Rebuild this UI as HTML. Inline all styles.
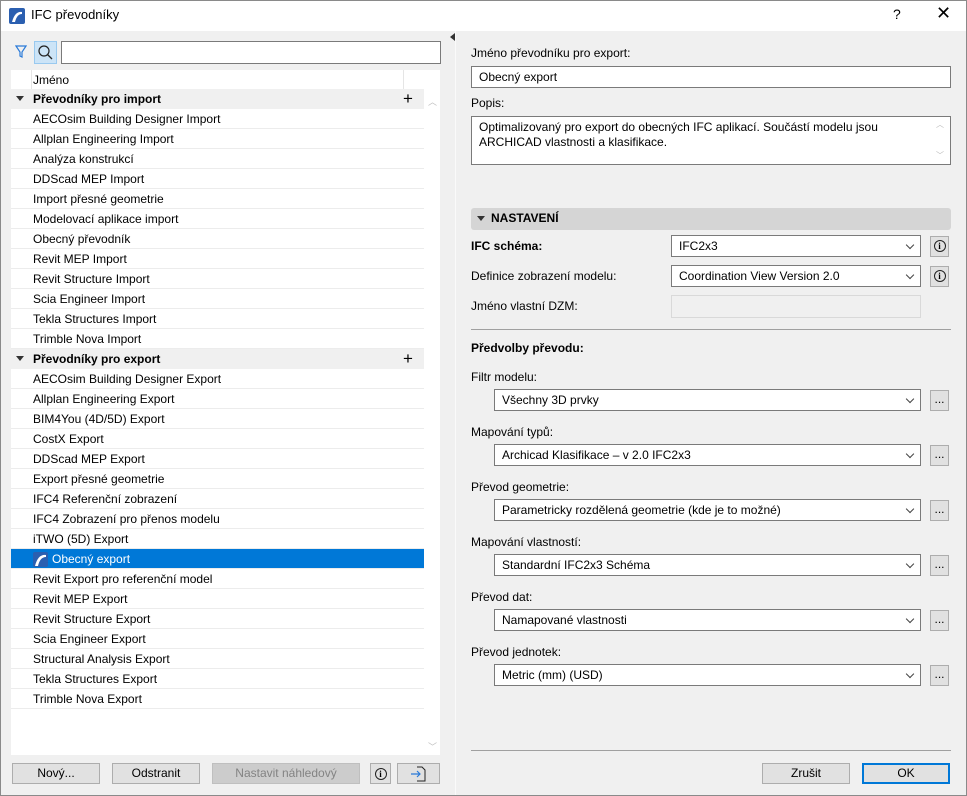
<!DOCTYPE html>
<html><head><meta charset="utf-8"><style>
*{box-sizing:border-box;margin:0;padding:0}
body{width:967px;height:796px;background:#f0f0f0;font-family:"Segoe UI","Liberation Sans","DejaVu Sans",sans-serif;font-size:12px;color:#000;position:relative;overflow:hidden}
.abs{position:absolute}
#win{position:absolute;left:0;top:0;width:967px;height:796px;border:1px solid #8a8a8a}
#title{position:absolute;left:0;top:0;width:967px;height:31px;background:#fff}
.list{position:absolute;left:11px;top:70px;width:429px;height:685px;background:#fff}
.row{position:absolute;left:0;width:413px;height:20px;line-height:21px;padding-left:22px;border-bottom:1px solid #ececec;white-space:nowrap}
.grp{background:#f0f0f0;font-weight:bold;border-bottom:none}
.sel{background:#0078d7;color:#fff}
.btn{position:absolute;height:21px;border:1px solid #adadad;background:#e1e1e1;text-align:center;line-height:19px}
.inp{position:absolute;background:#fff;border:1px solid #7a7a7a;padding-left:7px;line-height:21px;height:22px}
.dd{position:absolute;background:#fff;border:1px solid #7a7a7a;padding-left:7px;line-height:21px;height:22px}
.dd::after{content:"";position:absolute;right:7px;top:6px;width:5px;height:5px;border-right:1px solid #444;border-bottom:1px solid #444;transform:rotate(45deg)}
.lbl{position:absolute;left:471px}
.sq{position:absolute;width:19px;height:21px;border:1px solid #adadad;background:#e1e1e1;text-align:center;line-height:17px}
.info{display:inline-block;width:12px;height:12px;border:1.3px solid #222;border-radius:50%;font-size:9px;line-height:10px;font-weight:bold;font-family:"Liberation Serif",serif;margin-top:3px}
</style></head><body>
<div id="title">
<svg class="abs" style="left:9px;top:8px" width="16" height="16"><rect width="16" height="16" rx="2" fill="#2b5fb0"/><path d="M3 14 Q6 3 13 4 L13 6 Q8 6 6 14Z" fill="#fff"/></svg>
<div class="abs" style="left:31px;top:7px;font-size:13px">IFC převodníky</div>
<div class="abs" style="left:893px;top:6px;font-size:14px">?</div>
<div class="abs" style="left:936px;top:3px;font-size:18px">✕</div>
</div>
<svg class="abs" style="left:15px;top:45px" width="12" height="14"><path d="M1 1H11L7 7V12L5 11V7Z" fill="none" stroke="#2a7ad8" stroke-width="1.2"/></svg>
<div class="abs" style="left:34px;top:41px;width:23px;height:23px;background:#cce4f7;border:1px solid #99c9ef"></div>
<svg class="abs" style="left:37px;top:44px" width="17" height="17"><circle cx="7" cy="7" r="5" fill="none" stroke="#222" stroke-width="1.2"/><path d="M10.5 10.5L15 15" stroke="#222" stroke-width="1.3"/></svg>
<div class="abs" style="left:61px;top:41px;width:380px;height:23px;background:#fff;border:1px solid #7a7a7a"></div>
<div class="list">
<div class="row" style="top:0;border-bottom:1px solid #e5e5e5">Jméno</div>
<div class="abs" style="left:20px;top:0;width:1px;height:19px;background:#e5e5e5"></div>
<div class="abs" style="left:392px;top:0;width:1px;height:19px;background:#e5e5e5"></div>
<div class="row grp" style="top:19px">Převodníky pro import</div>
<div class="row" style="top:39px">AECOsim Building Designer Import</div>
<div class="row" style="top:59px">Allplan Engineering Import</div>
<div class="row" style="top:79px">Analýza konstrukcí</div>
<div class="row" style="top:99px">DDScad MEP Import</div>
<div class="row" style="top:119px">Import přesné geometrie</div>
<div class="row" style="top:139px">Modelovací aplikace import</div>
<div class="row" style="top:159px">Obecný převodník</div>
<div class="row" style="top:179px">Revit MEP Import</div>
<div class="row" style="top:199px">Revit Structure Import</div>
<div class="row" style="top:219px">Scia Engineer Import</div>
<div class="row" style="top:239px">Tekla Structures Import</div>
<div class="row" style="top:259px">Trimble Nova Import</div>
<div class="row grp" style="top:279px">Převodníky pro export</div>
<div class="row" style="top:299px">AECOsim Building Designer Export</div>
<div class="row" style="top:319px">Allplan Engineering Export</div>
<div class="row" style="top:339px">BIM4You (4D/5D) Export</div>
<div class="row" style="top:359px">CostX Export</div>
<div class="row" style="top:379px">DDScad MEP Export</div>
<div class="row" style="top:399px">Export přesné geometrie</div>
<div class="row" style="top:419px">IFC4 Referenční zobrazení</div>
<div class="row" style="top:439px">IFC4 Zobrazení pro přenos modelu</div>
<div class="row" style="top:459px">iTWO (5D) Export</div>
<div class="row sel" style="top:479px;padding-left:41px">Obecný export</div>
<svg class="abs" style="left:22px;top:482px" width="15" height="15"><rect width="15" height="15" rx="2" fill="#2b5fb0"/><path d="M2 14 Q5 2 13 3 L13 5 Q7 5 5 14Z" fill="#fff"/></svg>
<div class="row" style="top:499px">Revit Export pro referenční model</div>
<div class="row" style="top:519px">Revit MEP Export</div>
<div class="row" style="top:539px">Revit Structure Export</div>
<div class="row" style="top:559px">Scia Engineer Export</div>
<div class="row" style="top:579px">Structural Analysis Export</div>
<div class="row" style="top:599px">Tekla Structures Export</div>
<div class="row" style="top:619px">Trimble Nova Export</div>
<div class="abs" style="left:5px;top:26px;border:4px solid transparent;border-top:5px solid #333"></div>
<div class="abs" style="left:5px;top:286px;border:4px solid transparent;border-top:5px solid #333"></div>
<div class="abs" style="left:392px;top:19px;font-size:17px;line-height:20px">+</div>
<div class="abs" style="left:392px;top:279px;font-size:17px;line-height:20px">+</div>
<div class="abs" style="left:417px;top:25px;color:#c0c0c0;font-size:9px">︿</div>
<div class="abs" style="left:417px;top:670px;color:#c0c0c0;font-size:9px">﹀</div>
</div>
<div class="abs" style="left:450px;top:33px;border:4px solid transparent;border-right:5px solid #333;border-left:none"></div>
<div class="abs" style="left:455px;top:31px;width:1px;height:764px;background:#fafafa"></div>
<div class="btn" style="left:12px;top:763px;width:88px">Nový...</div>
<div class="btn" style="left:112px;top:763px;width:88px">Odstranit</div>
<div class="btn" style="left:212px;top:763px;width:148px;background:#ccc;border-color:#bfbfbf;color:#838383">Nastavit náhledový</div>
<div class="btn" style="left:370px;top:763px;width:21px"><span class="info" style="margin-top:2px">i</span></div>
<div class="btn" style="left:397px;top:763px;width:43px"><svg width="20" height="17" style="margin-top:1px"><path d="M8 2H13L16 5V16H8" fill="none" stroke="#222"/><path d="M2 9H11M8 6L11 9L8 12" fill="none" stroke="#2a7ad8" stroke-width="1.2"/></svg></div>
<div class="lbl" style="top:46px">Jméno převodníku pro export:</div>
<div class="inp" style="left:471px;top:66px;width:480px">Obecný export</div>
<div class="lbl" style="top:96px">Popis:</div>
<div class="inp" style="left:471px;top:116px;width:480px;height:49px;line-height:15px;padding-top:3px;padding-right:24px">Optimalizovaný pro export do obecných IFC aplikací. Součástí modelu jsou ARCHICAD vlastnosti a klasifikace.</div>
<div class="abs" style="left:936px;top:119px;color:#bbb;font-size:8px">︿</div>
<div class="abs" style="left:936px;top:150px;color:#bbb;font-size:8px">﹀</div>
<div class="abs" style="left:471px;top:208px;width:480px;height:22px;background:#d5d5d5;border-radius:3px;font-weight:bold;line-height:21px;padding-left:20px">NASTAVENÍ</div>
<div class="abs" style="left:477px;top:216px;border:4px solid transparent;border-top:5px solid #333"></div>
<div class="lbl" style="top:239px;font-weight:bold">IFC schéma:</div>
<div class="dd" style="left:671px;top:235px;width:250px">IFC2x3</div>
<div class="sq" style="left:930px;top:236px"><span class="info">i</span></div>
<div class="lbl" style="top:269px">Definice zobrazení modelu:</div>
<div class="dd" style="left:671px;top:265px;width:250px">Coordination View Version 2.0</div>
<div class="sq" style="left:930px;top:266px"><span class="info">i</span></div>
<div class="lbl" style="top:299px">Jméno vlastní DZM:</div>
<div class="abs" style="left:671px;top:295px;width:250px;height:23px;border:1px solid #d9d9d9;background:#f0f0f0"></div>
<div class="abs" style="left:471px;top:329px;width:480px;height:1px;background:#a0a0a0"></div>
<div class="lbl" style="top:341px;font-weight:bold">Předvolby převodu:</div>
<div class="lbl" style="top:370px">Filtr modelu:</div>
<div class="dd" style="left:494px;top:389px;width:427px">Všechny 3D prvky</div>
<div class="sq" style="left:930px;top:390px">...</div>
<div class="lbl" style="top:425px">Mapování typů:</div>
<div class="dd" style="left:494px;top:444px;width:427px">Archicad Klasifikace – v 2.0 IFC2x3</div>
<div class="sq" style="left:930px;top:445px">...</div>
<div class="lbl" style="top:480px">Převod geometrie:</div>
<div class="dd" style="left:494px;top:499px;width:427px">Parametricky rozdělená geometrie (kde je to možné)</div>
<div class="sq" style="left:930px;top:500px">...</div>
<div class="lbl" style="top:535px">Mapování vlastností:</div>
<div class="dd" style="left:494px;top:554px;width:427px">Standardní IFC2x3 Schéma</div>
<div class="sq" style="left:930px;top:555px">...</div>
<div class="lbl" style="top:590px">Převod dat:</div>
<div class="dd" style="left:494px;top:609px;width:427px">Namapované vlastnosti</div>
<div class="sq" style="left:930px;top:610px">...</div>
<div class="lbl" style="top:645px">Převod jednotek:</div>
<div class="dd" style="left:494px;top:664px;width:427px">Metric (mm) (USD)</div>
<div class="sq" style="left:930px;top:665px">...</div>
<div class="abs" style="left:471px;top:750px;width:480px;height:1px;background:#a0a0a0"></div>
<div class="btn" style="left:762px;top:763px;width:88px">Zrušit</div>
<div class="btn" style="left:862px;top:763px;width:88px;border:2px solid #0078d7;line-height:17px">OK</div>
<div id="win"></div>
</body></html>
